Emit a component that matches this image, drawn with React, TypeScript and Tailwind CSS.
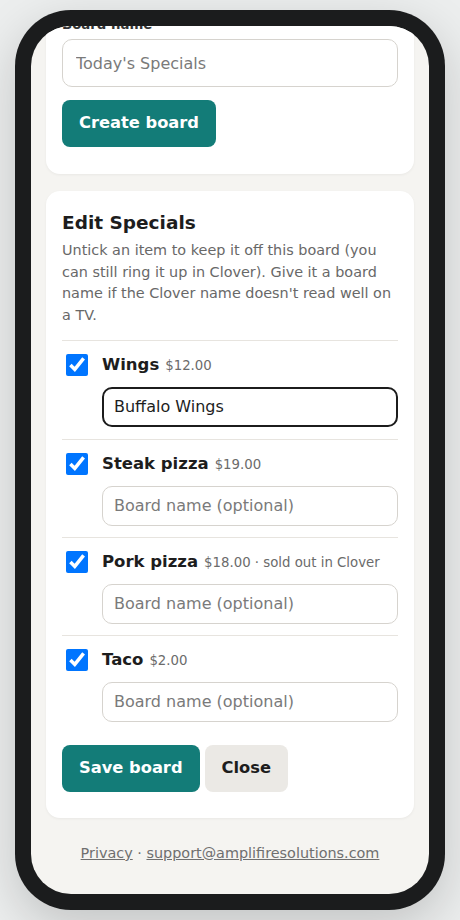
import React, { useLayoutEffect, useRef } from 'react';

interface Item {
    name: string;
    price: string;
    note?: string;
    boardName: string;
    focused?: boolean;
}

const items: Item[] = [
    { name: 'Wings', price: '$12.00', boardName: 'Buffalo Wings', focused: true },
    { name: 'Steak pizza', price: '$19.00', boardName: '' },
    { name: 'Pork pizza', price: '$18.00', note: 'sold out in Clover', boardName: '' },
    { name: 'Taco', price: '$2.00', boardName: '' },
];

const font = { fontFamily: '"DejaVu Sans", "Noto Sans", sans-serif' };

const ItemRow: React.FC<{ item: Item }> = ({ item }) => (
    <div
        className={`flex border-t border-[#e7e4df] pt-[12px] ${item.focused ? 'pb-[12px]' : 'pb-[11px]'}`}
    >
        <div className="w-[40px] shrink-0">
            <input
                type="checkbox"
                defaultChecked
                className="m-0 ml-[4px] mt-[1px] w-[22px] h-[22px] block"
            />
        </div>
        <div className="flex-1 min-w-0">
            <div className="h-[24px] flex items-baseline whitespace-nowrap leading-[24px]">
                <span className="text-[16.5px] font-bold text-[#1d1d1d]">{item.name}</span>
                <span className="ml-[6px] text-[13.3px] text-[#6b6b6b]">
                    {item.price}
                    {item.note ? ` · ${item.note}` : ''}
                </span>
            </div>
            <input
                type="text"
                defaultValue={item.boardName}
                placeholder="Board name (optional)"
                className={
                    item.focused
                        ? 'mt-[10px] block w-full h-[40px] rounded-[10px] border-2 border-[#1c1c1c] px-[10px] text-[16px] text-[#1d1d1d] bg-white outline-none'
                        : 'mt-[10px] block w-full h-[40px] rounded-[10px] border border-[#d6d3ce] px-[11px] text-[16px] text-[#1d1d1d] placeholder:text-[#7a7a7a] bg-white outline-none'
                }
                style={font}
            />
        </div>
    </div>
);

export default function App() {
    const screenRef = useRef<HTMLDivElement>(null);

    // the screen is shown scrolled part-way down
    useLayoutEffect(() => {
        if (screenRef.current) screenRef.current.scrollTop = 85;
    }, []);

    return (
        <div
            className="w-full h-[920px] flex justify-center pt-[10px] bg-[#eceeee]"
            style={font}
        >
            <div className="w-[430px] h-[900px] rounded-[56px] bg-[#1b1c1d] p-[16px] shadow-[0_16px_50px_rgba(0,0,0,0.18)]">
                <div
                    ref={screenRef}
                    className="h-full w-full rounded-[40px] bg-[#f5f4f1] overflow-hidden"
                >
                    <div className="px-[15px] pt-[16px] pb-[30px] flex flex-col">
                        {/* 新建看板 */}
                        <div className="bg-white rounded-[14px] px-[16px] pt-[20px] pb-[27px] shadow-[0_1px_3px_rgba(0,0,0,0.05)]">
                            <h2 className="text-[18.5px] leading-[23px] font-bold text-[#1d1d1d] mb-[14px]">
                                New board
                            </h2>
                            <label className="block text-[13.3px] leading-[20px] font-bold text-[#333] mb-[4px]">
                                Board name
                            </label>
                            <input
                                type="text"
                                placeholder="Today's Specials"
                                className="block w-full h-[48px] rounded-[10px] border border-[#d6d3ce] px-[13px] text-[16px] text-[#1d1d1d] placeholder:text-[#7a7a7a] bg-white outline-none"
                                style={font}
                            />
                            <button
                                className="mt-[13px] h-[47px] px-[17px] rounded-[8px] bg-[#137c78] text-white text-[16.3px] font-bold"
                                style={font}
                            >
                                Create board
                            </button>
                        </div>

                        {/* 编辑特价 */}
                        <div className="mt-[17px] bg-white rounded-[14px] px-[16px] pt-[20px] pb-[26px] shadow-[0_1px_3px_rgba(0,0,0,0.05)]">
                            <h2 className="text-[18.5px] leading-[23px] font-bold text-[#1d1d1d]">
                                Edit Specials
                            </h2>
                            <p className="mt-[6px] text-[14.4px] leading-[21.7px] text-[#686868]">
                                Untick an item to keep it off this board (you can still ring it up
                                in Clover). Give it a board name if the Clover name doesn't read
                                well on a TV.
                            </p>
                            <div className="mt-[13px]">
                                {items.map((item) => (
                                    <ItemRow key={item.name} item={item} />
                                ))}
                            </div>
                            <div className="mt-[12px] flex gap-[5px]">
                                <button
                                    className="h-[47px] px-[17px] rounded-[8px] bg-[#137c78] text-white text-[16.3px] font-bold"
                                    style={font}
                                >
                                    Save board
                                </button>
                                <button
                                    className="h-[47px] px-[17px] rounded-[8px] bg-[#ebe9e5] text-[#1d1d1d] text-[16.3px] font-bold"
                                    style={font}
                                >
                                    Close
                                </button>
                            </div>
                        </div>

                        <div className="mt-[25px] text-center text-[14.4px] leading-[21px] text-[#6f6f6f]">
                            <a href="#" className="underline">
                                Privacy
                            </a>
                            {' · '}
                            <a href="#" className="underline">
                                support@amplifiresolutions.com
                            </a>
                        </div>
                    </div>
                </div>
            </div>
        </div>
    );
}
